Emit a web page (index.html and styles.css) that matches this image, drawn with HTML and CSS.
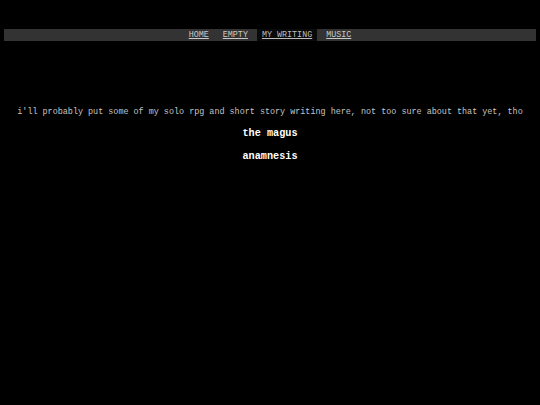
FILE: index.html
```html
<!DOCTYPE html>
<html>
<head>
<meta charset="utf-8">
<link rel="stylesheet" href="styles.css">
</head>
<body>
<nav class="nav">
  <a class="nav-link" href="#">HOME</a>
  <a class="nav-link" href="#">EMPTY</a>
  <a class="nav-link active" href="#">MY WRITING</a>
  <a class="nav-link" href="#">MUSIC</a>
</nav>
<main class="content">
  <p class="intro">i'll probably put some of my solo rpg and short story writing here, not too sure about that yet, tho</p>
  <a class="story" href="#">the magus</a>
  <a class="story" href="#">anamnesis</a>
</main>
</body>
</html>
```
FILE: styles.css
```css
html, body {
  margin: 0;
  padding: 0;
  background: #000;
  height: 100%;
}
body {
  font-family: "Courier New", "Nimbus Mono PS", "FreeMono", "Liberation Mono", monospace;
  color: #cccccc;
}
.nav {
  margin: 29px 4px 0 4px;
  height: 12px;
  background: #333333;
  display: flex;
  justify-content: center;
  align-items: stretch;
  gap: 4px;
}
.nav-link {
  display: block;
  padding: 0 5px;
  font-size: 8.4px;
  line-height: 12px;
  color: #c8c8c8;
  text-decoration: underline;
}
.nav-link.active {
  background: #0a0a0a;
  color: #bdbdbd;
}
.content {
  display: flex;
  flex-direction: column;
  align-items: center;
  padding-top: 65px;
}
.intro {
  margin: 0;
  font-size: 8.43px;
  line-height: 12px;
  color: #c4c4c4;
  white-space: nowrap;
}
.story {
  margin-top: 10px;
  font-size: 10.2px;
  line-height: 12px;
  font-weight: bold;
  color: #ffffff;
  text-decoration: none;
}
.story + .story {
  margin-top: 11px;
}
```
